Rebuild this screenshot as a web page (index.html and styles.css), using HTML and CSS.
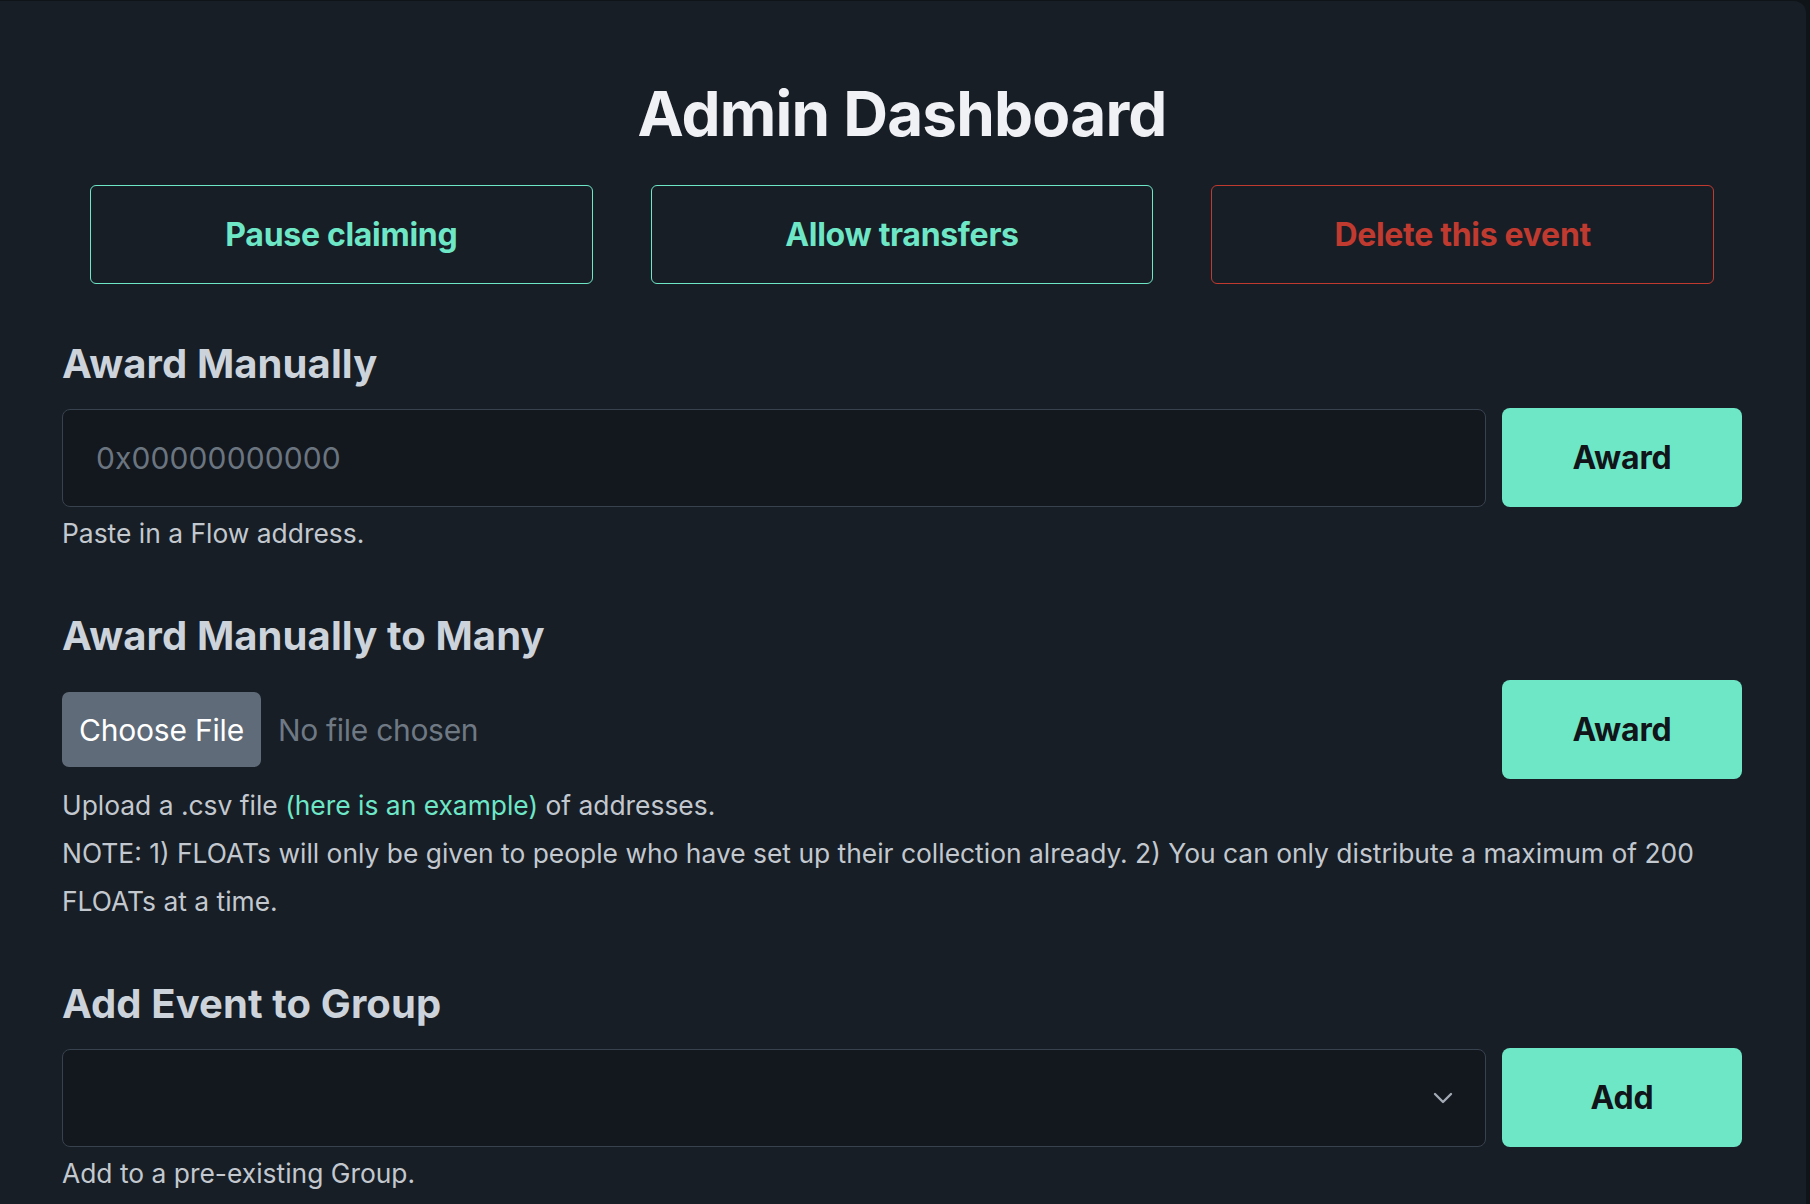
FILE: index.html
```html
<!DOCTYPE html>
<html lang="en">
<head>
<meta charset="utf-8">
<title>Admin Dashboard</title>
<link rel="stylesheet" href="styles.css">
</head>
<body>
<main class="page">
  <h1 class="title">Admin Dashboard</h1>
  <div class="actions">
    <button class="outline teal">Pause claiming</button>
    <button class="outline teal">Allow transfers</button>
    <button class="outline red">Delete this event</button>
  </div>

  <section class="block">
    <h2 class="heading">Award Manually</h2>
    <div class="row">
      <div class="field"><span class="placeholder">0x00000000000</span></div>
      <button class="primary">Award</button>
    </div>
    <p class="help">Paste in a Flow address.</p>
  </section>

  <section class="block">
    <h2 class="heading">Award Manually to Many</h2>
    <div class="row">
      <div class="file">
        <span class="file-btn">Choose File</span>
        <span class="file-name">No file chosen</span>
      </div>
      <button class="primary">Award</button>
    </div>
    <p class="help">Upload a .csv file <a class="link" href="#">(here is an example)</a> of addresses.<br>NOTE: 1) FLOATs will only be given to people who have set up their collection already. 2) You can only distribute a maximum of 200 FLOATs at a time.</p>
  </section>

  <section class="block">
    <h2 class="heading">Add Event to Group</h2>
    <div class="row">
      <div class="field select">
        <svg class="chevron" width="20" height="12" viewBox="0 0 20 12" fill="none"><path d="M2 2l8 8 8-8" stroke="#a3aab3" stroke-width="2.4" stroke-linecap="round" stroke-linejoin="round"/></svg>
      </div>
      <button class="primary">Add</button>
    </div>
    <p class="help">Add to a pre-existing Group.</p>
  </section>
</main>
</body>
</html>
```

FILE: styles.css
```css
* { box-sizing: border-box; }

html, body {
  margin: 0;
  padding: 0;
}

body {
  background: #0f1418;
  font-family: Inter, "Noto Sans", "Liberation Sans", sans-serif;
  padding-top: 1px;
  padding-right: 4px;
}

.page {
  background: #171e26;
  border-top-right-radius: 12px;
  min-height: 1203px;
  padding: 76px 64px 40px 62px;
}

.title {
  margin: 0;
  text-align: center;
  font-size: 62px;
  line-height: 74px;
  font-weight: 700;
  color: #f0f1f4;
  letter-spacing: -0.8px;
}

.actions {
  display: grid;
  grid-template-columns: repeat(3, 1fr);
  column-gap: 58px;
  padding: 0 28px;
  margin-top: 34px;
}

button {
  font-family: inherit;
  cursor: pointer;
}

.outline {
  height: 99px;
  background: transparent;
  border: 1px solid;
  border-radius: 6px;
  font-size: 32px;
  font-weight: 700;
  letter-spacing: -0.3px;
}

.outline.teal {
  color: #6ee7c7;
  border-color: #6ee7c7;
}

.outline.red {
  color: #c03a30;
  border-color: #c03a30;
}

.block {
  margin-top: 56px;
}

.block + .block {
  margin-top: 55px;
}

.heading {
  margin: 0;
  font-size: 40px;
  line-height: 48px;
  font-weight: 700;
  color: #cdd3db;
  letter-spacing: 0.1px;
}

.row {
  display: flex;
  align-items: center;
  gap: 16px;
  margin-top: 20px;
}

.field {
  flex: 1;
  height: 98px;
  background: #13171e;
  border: 1px solid #38424e;
  border-radius: 8px;
  padding-left: 33px;
  display: flex;
  align-items: center;
}

.placeholder {
  font-size: 30px;
  color: #6b7580;
  letter-spacing: 0.1px;
}

.select {
  justify-content: flex-end;
  padding-right: 32px;
}

.chevron {
  display: block;
}

.primary {
  flex: 0 0 240px;
  height: 99px;
  border: 0;
  border-radius: 8px;
  background: #6ee7c7;
  color: #111418;
  font-size: 32px;
  font-weight: 700;
  letter-spacing: -0.2px;
}

.file {
  flex: 1;
  display: flex;
  align-items: center;
  gap: 17px;
}

.file-btn {
  height: 75px;
  padding: 0 17px;
  display: flex;
  align-items: center;
  background: #5f6b78;
  color: #ffffff;
  border-radius: 7px;
  font-size: 30px;
  letter-spacing: -0.2px;
}

.file-name {
  font-size: 30px;
  color: #6f7984;
  letter-spacing: -0.3px;
}

.help {
  margin: 2px 0 0;
  font-size: 26.4px;
  line-height: 48px;
  color: #c3c8cf;
}

.link {
  color: #6ee7c7;
  text-decoration: none;
}
```
